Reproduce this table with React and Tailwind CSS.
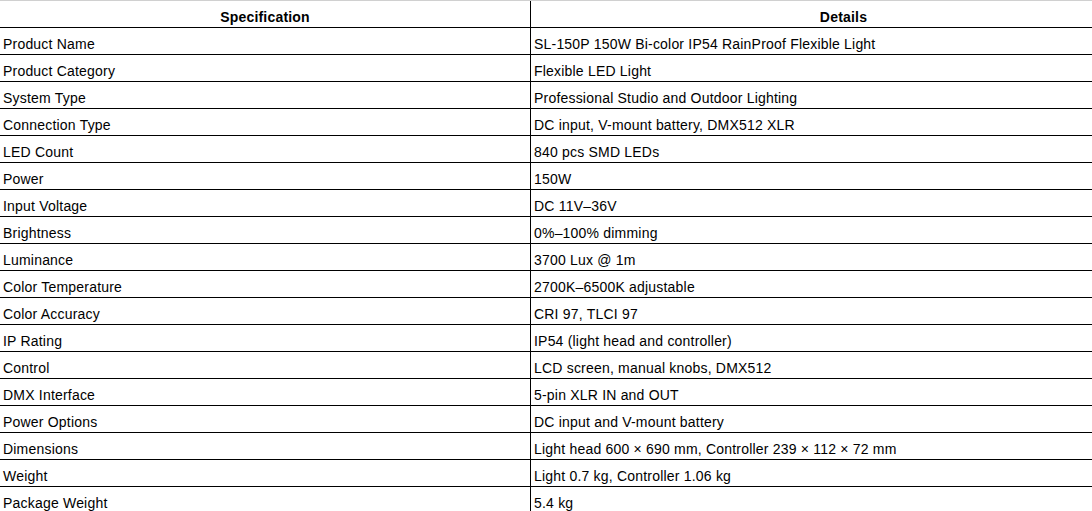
import React from 'react';

const specs = [
  ['Product Name', 'SL-150P 150W Bi-color IP54 RainProof Flexible Light'],
  ['Product Category', 'Flexible LED Light'],
  ['System Type', 'Professional Studio and Outdoor Lighting'],
  ['Connection Type', 'DC input, V-mount battery, DMX512 XLR'],
  ['LED Count', '840 pcs SMD LEDs'],
  ['Power', '150W'],
  ['Input Voltage', 'DC 11V–36V'],
  ['Brightness', '0%–100% dimming'],
  ['Luminance', '3700 Lux @ 1m'],
  ['Color Temperature', '2700K–6500K adjustable'],
  ['Color Accuracy', 'CRI 97, TLCI 97'],
  ['IP Rating', 'IP54 (light head and controller)'],
  ['Control', 'LCD screen, manual knobs, DMX512'],
  ['DMX Interface', '5-pin XLR IN and OUT'],
  ['Power Options', 'DC input and V-mount battery'],
  ['Dimensions', 'Light head 600 × 690 mm, Controller 239 × 112 × 72 mm'],
  ['Weight', 'Light 0.7 kg, Controller 1.06 kg'],
  ['Package Weight', '5.4 kg'],
];

export default function App() {
  return (
    <div className="w-[1092px] h-[511px] overflow-hidden bg-white text-black text-[14px] leading-4 tracking-[0.2px] font-['Liberation_Sans',Arial,sans-serif]">
      <div className="w-[1156px] border-t border-[#d0d0d0]">
        {/* header */}
        <div className="flex h-[27px] border-b border-black font-bold">
          <div className="w-[531px] shrink-0 border-r border-black pt-[8px] text-center">Specification</div>
          <div className="flex-1 pt-[8px] text-center">Details</div>
        </div>

        {/* rows */}
        {specs.map(([label, value]) => (
          <div key={label} className="flex h-[27px] border-b border-black">
            <div className="w-[531px] shrink-0 border-r border-black pt-[8px] pl-[3px] whitespace-nowrap">{label}</div>
            <div className="flex-1 pt-[8px] pl-[3px] whitespace-nowrap">{value}</div>
          </div>
        ))}
      </div>
    </div>
  );
}
